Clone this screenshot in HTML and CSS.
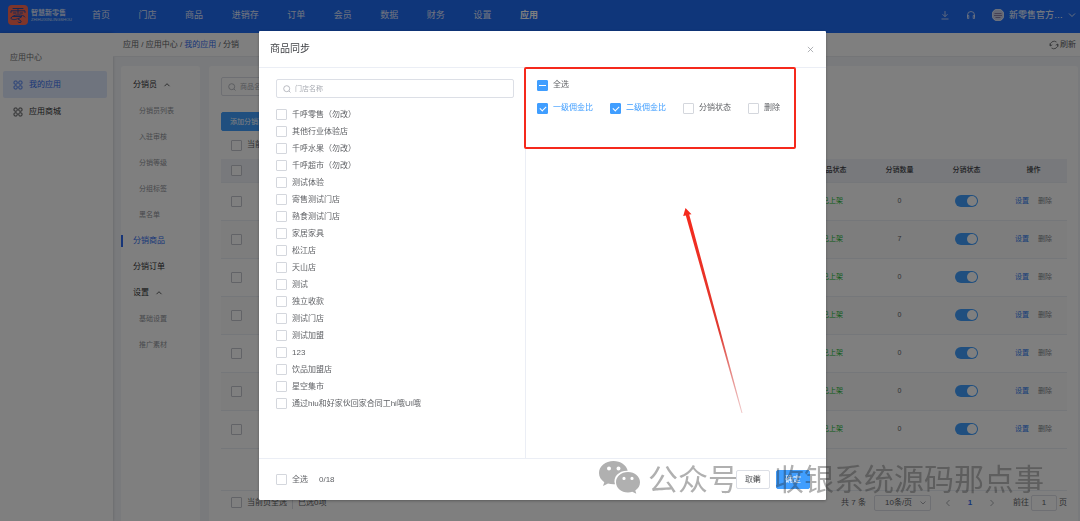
FILE: index.html
```html
<!DOCTYPE html>
<html lang="zh-CN">
<head>
<meta charset="utf-8">
<title>分销商品</title>
<link rel="stylesheet" href="styles.css">
</head>
<body>
<div class="app">
  <header class="topbar">
    <svg class="logo" viewBox="0 0 20 20"><rect width="20" height="20" rx="4" fill="#ff6a55"/><path d="M5 3.500h10M3 7.500V5.800h14v1.700M10 3.500v5M5.500 8h2.500M12 8h2.500M3 13c1-4 13-4 14-1M5 11.500h9l-4 2.500 3 2c1 2-2 2-3 1M3 13.500c2 2 5 1 7 0" fill="none" stroke="#2b4fa8" stroke-width="1" stroke-linecap="round"/></svg>
    <div class="brand"><span class="brand-name">智慧新零售</span><span class="brand-sub">ZHIHUIXINLINGSHOU</span></div>
    <nav class="topnav">
      <a href="#">首页</a><a href="#">门店</a><a href="#">商品</a><a href="#">进销存</a><a href="#">订单</a><a href="#">会员</a><a href="#">数据</a><a href="#">财务</a><a href="#">设置</a><a href="#" class="current">应用</a>
    </nav>
    <div class="tools">
      <svg class="tool" viewBox="0 0 10 10"><path d="M5 1v5.500M2.500 4.200 5 6.700l2.500-2.500M1.500 9h7"/></svg>
      <svg class="tool" viewBox="0 0 10 10"><path d="M1.500 7V5a3.500 3.500 0 0 1 7 0v2M1.500 5.500h1.300v3H1.500zM7.200 5.500h1.300v3H7.200z"/></svg>
      <div class="account">
        <svg class="avatar" viewBox="0 0 12 12"><circle cx="6" cy="6" r="6" fill="#c9d0ea"/><path d="M2.500 4.500h7M2 6.500h8M3.500 8.500h5" stroke="#8b80a8" stroke-width="1"/></svg>
        <span>新零售官方…</span>
        <svg class="caret" viewBox="0 0 8 8"><path d="M1 2.500 4 5.500l3-3"/></svg>
      </div>
    </div>
  </header>

  <div class="body">
    <aside class="sidebar">
      <p class="side-title">应用中心</p>
      <a href="#" class="side-item active"><svg class="grid-icon" viewBox="0 0 10 10"><rect x="1" y="1" width="3.200" height="3.200" rx="1"/><rect x="5.800" y="1" width="3.200" height="3.200" rx="1"/><rect x="1" y="5.800" width="3.200" height="3.200" rx="1"/><rect x="5.800" y="5.800" width="3.200" height="3.200" rx="1"/></svg>我的应用</a>
      <a href="#" class="side-item"><svg class="grid-icon" viewBox="0 0 10 10"><rect x="1" y="1" width="3.200" height="3.200" rx="1"/><rect x="5.800" y="1" width="3.200" height="3.200" rx="1"/><rect x="1" y="5.800" width="3.200" height="3.200" rx="1"/><rect x="5.800" y="5.800" width="3.200" height="3.200" rx="1"/></svg>应用商城</a>
    </aside>

    <main class="main">
      <div class="crumbs">
        <div>应用 / 应用中心 / <a href="#">我的应用</a> / 分销</div>
        <button class="refresh" type="button"><svg viewBox="0 0 10 10"><path d="M1.200 6A4 4 0 0 1 7.500 2M8.800 4A4 4 0 0 1 2.500 8M1 3.500 1.300 6l2-1.200M9 6.500 8.700 4l-2 1.200"/></svg>刷新</button>
      </div>
      <div class="cards">
        <nav class="card subnav">
          <a href="#" class="group">分销员<svg class="caret" viewBox="0 0 8 8"><path d="M1.500 5.200 4 2.700l2.500 2.500"/></svg></a>
          <a href="#" class="leaf">分销员列表</a>
          <a href="#" class="leaf">入驻审核</a>
          <a href="#" class="leaf">分销等级</a>
          <a href="#" class="leaf">分组标签</a>
          <a href="#" class="leaf">黑名单</a>
          <a href="#" class="group selected">分销商品</a>
          <a href="#" class="group">分销订单</a>
          <a href="#" class="group">设置<svg class="caret" viewBox="0 0 8 8"><path d="M1.500 5.200 4 2.700l2.500 2.500"/></svg></a>
          <a href="#" class="leaf">基础设置</a>
          <a href="#" class="leaf">推广素材</a>
        </nav>

        <section class="card content">
          <label class="search goods-search"><svg viewBox="0 0 8 8"><circle cx="3.700" cy="3.700" r="3"/><path d="m6 6 1.500 1.500"/></svg><input type="text" placeholder="商品名称"></label>
          <button class="btn primary add" type="button">添加分销商品</button>
          <label class="check page-check"><input type="checkbox">当前页全选</label>
          <table class="goods">
            <colgroup><col class="c-check"><col><col class="c-data"><col class="c-data"><col class="c-data"><col class="c-data"></colgroup>
            <thead><tr><th><input type="checkbox" aria-label="全选"></th><th></th><th>商品状态</th><th>分销数量</th><th>分销状态</th><th>操作</th></tr></thead>
            <tbody>
              <tr><td><input type="checkbox" aria-label="选择"></td><td></td><td class="on">已上架</td><td>0</td><td><input class="switch" type="checkbox" checked aria-label="分销状态"></td><td class="ops"><a href="#">设置</a><a href="#" class="del">删除</a></td></tr>
              <tr><td><input type="checkbox" aria-label="选择"></td><td></td><td class="on">已上架</td><td>7</td><td><input class="switch" type="checkbox" checked aria-label="分销状态"></td><td class="ops"><a href="#">设置</a><a href="#" class="del">删除</a></td></tr>
              <tr><td><input type="checkbox" aria-label="选择"></td><td></td><td class="on">已上架</td><td>0</td><td><input class="switch" type="checkbox" checked aria-label="分销状态"></td><td class="ops"><a href="#">设置</a><a href="#" class="del">删除</a></td></tr>
              <tr><td><input type="checkbox" aria-label="选择"></td><td></td><td class="on">已上架</td><td>0</td><td><input class="switch" type="checkbox" checked aria-label="分销状态"></td><td class="ops"><a href="#">设置</a><a href="#" class="del">删除</a></td></tr>
              <tr><td><input type="checkbox" aria-label="选择"></td><td></td><td class="on">已上架</td><td>0</td><td><input class="switch" type="checkbox" checked aria-label="分销状态"></td><td class="ops"><a href="#">设置</a><a href="#" class="del">删除</a></td></tr>
              <tr><td><input type="checkbox" aria-label="选择"></td><td></td><td class="on">已上架</td><td>0</td><td><input class="switch" type="checkbox" checked aria-label="分销状态"></td><td class="ops"><a href="#">设置</a><a href="#" class="del">删除</a></td></tr>
              <tr><td><input type="checkbox" aria-label="选择"></td><td></td><td class="on">已上架</td><td>0</td><td><input class="switch" type="checkbox" checked aria-label="分销状态"></td><td class="ops"><a href="#">设置</a><a href="#" class="del">删除</a></td></tr>
            </tbody>
          </table>
          <footer class="pager">
            <label class="check"><input type="checkbox">当前页全选</label>
            <span class="picked">已选0项</span>
            <span class="total">共 7 条</span>
            <span class="size"><select aria-label="每页条数"><option>10条/页</option></select><svg class="caret" viewBox="0 0 8 8"><path d="M1.500 2.500 4 5l2.500-2.500"/></svg></span>
            <button type="button" aria-label="上一页"><svg class="caret" viewBox="0 0 8 8"><path d="M5.500 1 2.500 4l3 3"/></svg></button>
            <button type="button" class="num">1</button>
            <button type="button" aria-label="下一页"><svg class="caret" viewBox="0 0 8 8"><path d="m2.500 1 3 3-3 3"/></svg></button>
            <label class="jump">前往<input type="text" value="1">页</label>
          </footer>
        </section>
      </div>
    </main>
  </div>
</div>

<div class="overlay">
  <div class="dialog" role="dialog" aria-labelledby="dlg-title">
    <header class="dlg-head">
      <h2 id="dlg-title">商品同步</h2>
      <button type="button" class="close" aria-label="关闭"><svg viewBox="0 0 8 8"><path d="m1 1 6 6M7 1 1 7"/></svg></button>
    </header>
    <div class="dlg-body">
      <div class="stores">
        <label class="search"><svg viewBox="0 0 8 8"><circle cx="3.700" cy="3.700" r="3"/><path d="m6 6 1.500 1.500"/></svg><input type="text" placeholder="门店名称"></label>
        <div class="store-list">
          <label class="check"><input type="checkbox">千呼零售（勿改）</label>
          <label class="check"><input type="checkbox">其他行业体验店</label>
          <label class="check"><input type="checkbox">千呼水果（勿改）</label>
          <label class="check"><input type="checkbox">千呼超市（勿改）</label>
          <label class="check"><input type="checkbox">测试体验</label>
          <label class="check"><input type="checkbox">寄售测试门店</label>
          <label class="check"><input type="checkbox">熟食测试门店</label>
          <label class="check"><input type="checkbox">家居家具</label>
          <label class="check"><input type="checkbox">松江店</label>
          <label class="check"><input type="checkbox">天山店</label>
          <label class="check"><input type="checkbox">测试</label>
          <label class="check"><input type="checkbox">独立收款</label>
          <label class="check"><input type="checkbox">测试门店</label>
          <label class="check"><input type="checkbox">测试加盟</label>
          <label class="check"><input type="checkbox">123</label>
          <label class="check"><input type="checkbox">饮品加盟店</label>
          <label class="check"><input type="checkbox">星空集市</label>
          <label class="check"><input type="checkbox">通过hiu和好家伙回家合同工hi哦UI哦</label>
        </div>
      </div>
      <div class="fields">
        <label class="check"><input type="checkbox" class="partial">全选</label>
        <div class="field-row">
          <label class="check checked"><input type="checkbox" checked>一级佣金比</label>
          <label class="check checked"><input type="checkbox" checked>二级佣金比</label>
          <label class="check"><input type="checkbox">分销状态</label>
          <label class="check"><input type="checkbox">删除</label>
        </div>
      </div>
    </div>
    <footer class="dlg-foot">
      <label class="check"><input type="checkbox">全选</label>
      <span class="count">0/18</span>
      <button type="button" class="btn">取消</button>
      <button type="button" class="btn primary">确定</button>
    </footer>
    <div class="mark-box"></div>
    <svg class="mark-arrow" viewBox="0 0 62 208"><defs><linearGradient id="fade" x1="0" y1="0" x2="0" y2="1"><stop offset="0" stop-color="#f5291c"/><stop offset=".6" stop-color="#e03a30"/><stop offset="1" stop-color="#d05050" stop-opacity=".3"/></linearGradient></defs><path d="M3.500 0 9.500 6.200 7.200 6.600 60.500 205 59.500 205 3.800 7.600 1.200 8z" fill="url(#fade)"/></svg>
  </div>
</div>

<div class="watermark">
  <svg viewBox="0 0 42 34"><path fill-rule="evenodd" d="M14.500 1C6.500 1 0 6.300 0 13c0 3.800 2 7 5.300 9.200L4 26l5-2.400c2 .6 4.500.9 7 .7C13.500 17 20 10.500 28.700 10.800 27.500 5 21.500 1 14.500 1zM10 6.500a2 2 0 1 1 0 4 2 2 0 0 1 0-4zm9.500 0a2 2 0 1 1 0 4 2 2 0 0 1 0-4z"/><path fill-rule="evenodd" d="M29 12c-6.800 0-12 4.500-12 10.200S22.200 32.500 29 32.500c1.600 0 3-.3 4.300-.7l4 2-1-3.400c2.900-1.900 4.700-4.900 4.700-8.200C41 16.500 35.800 12 29 12zm-4 4.800a1.600 1.600 0 1 1 0 3.200 1.600 1.600 0 0 1 0-3.200zm8 0a1.600 1.600 0 1 1 0 3.200 1.600 1.600 0 0 1 0-3.200z"/></svg>
  <span>公众号</span><span class="dot">·</span><span>收银系统源码那点事</span>
</div>
</body>
</html>
```
FILE: styles.css
```css
* { box-sizing: border-box; }
html, body { height: 100%; margin: 0; }
body {
  overflow: hidden;
  font: 8px/12px "Liberation Sans", "Noto Sans CJK SC", sans-serif;
  color: #606266;
  background: #f3f5f9;
}
a { color: inherit; text-decoration: none; }
button, input, select { font: inherit; color: inherit; margin: 0; padding: 0; }
button { border: 0; background: none; cursor: pointer; }
svg { flex: none; fill: none; stroke: currentColor; stroke-width: .8; }
.caret { width: 8px; height: 8px; }

.app { display: flex; flex-direction: column; height: 100vh; }

.topbar {
  display: flex;
  align-items: center;
  flex: none;
  height: 33px;
  padding: 0 4px 3px 8px;
  background: #1e6cf5;
  color: #e0e8ff;
  font-size: 9px;
}
.logo { width: 20px; height: 20px; stroke: none; }
.brand { display: flex; flex-direction: column; width: 61px; margin-left: 3px; color: #d5e0fa; }
.brand-name { font-size: 7px; line-height: 9px; font-weight: 700; }
.brand-sub { font-size: 4px; line-height: 5px; }
.topnav { display: flex; justify-content: space-between; width: 446px; }
.topnav .current { color: #fff; font-weight: 700; }
.tools { display: flex; align-items: center; gap: 16px; margin-left: auto; }
.tool { width: 10px; height: 10px; }
.account { display: flex; align-items: center; gap: 5px; color: #fff; }
.avatar { width: 12px; height: 12px; }

.body { display: flex; flex: 1; min-height: 0; }
.sidebar {
  flex: none;
  width: 113px;
  padding: 19px 6px 0 3px;
  background: #fff;
  box-shadow: 0 0 3px rgba(0, 0, 0, .2);
}
.side-title { margin: 0 0 7px 7px; color: #707276; }
.side-item {
  display: flex;
  align-items: center;
  gap: 6px;
  height: 27px;
  padding-left: 10px;
  border-radius: 2px;
  color: #303133;
}
.side-item.active { background: #dfe8fc; color: #2f6bf0; }
.grid-icon { width: 10px; height: 10px; }

.main { display: flex; flex-direction: column; flex: 1; min-width: 0; }
.crumbs {
  display: flex;
  align-items: center;
  justify-content: space-between;
  flex: none;
  height: 24px;
  padding: 0 4px 0 10px;
  border-bottom: 1px solid #e8eaee;
  background: #fff;
}
.crumbs a { color: #2f6bf0; }
.refresh { display: flex; align-items: center; gap: 1px; }
.refresh svg { width: 10px; height: 10px; }

.cards { display: flex; flex: 1; gap: 9px; min-height: 0; padding: 9px 2px 0 8px; }
.card { background: #fff; border-radius: 3px 3px 0 0; }
.subnav { flex: none; width: 79px; padding-top: 6px; }
.subnav a { display: flex; align-items: center; gap: 6px; height: 26px; }
.group { padding-left: 12px; color: #303133; }
.leaf { padding-left: 18px; color: #909399; font-size: 7px; }
.subnav .selected { color: #2f6bf0; }
.selected::before { content: ""; width: 2px; height: 12px; margin-left: -12px; margin-right: 4px; background: #2f6bf0; }

.content { display: flex; flex-direction: column; align-items: flex-start; flex: 1; min-width: 0; padding: 11px 11px 0 12px; }
.search {
  display: flex;
  align-items: center;
  gap: 4px;
  height: 19px;
  padding: 0 6px;
  border: 1px solid #dcdfe6;
  border-radius: 2px;
  background: #fff;
  color: #a8abb2;
}
.search svg { width: 8px; height: 8px; }
.search input { flex: 1; min-width: 0; border: 0; outline: 0; background: none; font-size: 7px; }
.search input::placeholder { color: #a8abb2; opacity: 1; }
.goods-search { width: 120px; }
.btn {
  width: 34px;
  height: 19px;
  border: 1px solid #dcdfe6;
  border-radius: 2px;
  background: #fff;
}
.btn.primary { border-color: #409eff; background: #409eff; color: #fff; }
.btn.add { width: 60px; margin-top: 16px; font-size: 7px; }

.check { display: flex; align-items: center; gap: 5px; white-space: nowrap; }
input[type="checkbox"] {
  display: block;
  appearance: none;
  flex: none;
  width: 11px;
  height: 11px;
  border: 1px solid #d4d7dd;
  border-radius: 1px;
  background: #fff;
}
.content input[type="checkbox"]:not(.switch) { border-color: #c4c7ce; }
.check.checked { color: #409eff; }
.check input:checked, .check .partial { position: relative; border-color: #409eff; background: #409eff; }
.check input:checked::after {
  content: "";
  position: absolute;
  left: 3px;
  top: 1px;
  width: 3px;
  height: 5px;
  border: solid #fff;
  border-width: 0 1px 1px 0;
  transform: rotate(45deg);
}
.check .partial::after { content: ""; position: absolute; left: 1px; right: 1px; top: 4px; height: 1px; background: #fff; }
.page-check { height: 28px; padding-left: 10px; }

.goods { width: 100%; table-layout: fixed; border-collapse: collapse; font-size: 7px; text-align: center; }
.c-check { width: 31px; }
.c-data { width: 67px; }
.goods th, .goods td { padding: 0; border-bottom: 1px solid #ebeef5; }
.goods th { height: 23px; background: #f0f3f9; color: #404246; font-weight: 500; }
.goods td { height: 38px; }
.goods tbody tr:nth-child(even) { background: #fafafa; }
.goods input { margin: 0 auto; }
.goods .on { color: #22b830; }
.ops a { color: #2f7df0; }
.ops .del { margin-left: 9px; color: #808388; }
input[type="checkbox"].switch {
  width: 23px;
  height: 12px;
  padding: 1px;
  border: 0;
  border-radius: 6px;
  background: #409eff;
}
.switch::before { content: ""; display: block; width: 10px; height: 10px; margin-left: auto; border-radius: 50%; background: #fff; }

.pager {
  display: flex;
  align-items: center;
  width: 100%;
  height: 25px;
  margin-top: 41px;
  padding-left: 10px;
  border-top: 1px solid #ebeef5;
  white-space: nowrap;
}
.picked { margin-left: 5px; padding-left: 5px; border-left: 1px solid #dcdfe6; }
.total { margin-left: auto; margin-right: 8px; }
.size { display: flex; align-items: center; width: 57px; height: 16px; margin-right: 6px; padding-right: 3px; border: 1px solid #dcdfe6; border-radius: 2px; }
.size select { appearance: none; flex: 1; min-width: 0; padding-left: 10px; border: 0; background: none; }
.pager .caret { color: #909399; }
.pager button { display: flex; align-items: center; justify-content: center; width: 22px; height: 16px; }
.pager .num { color: #2f6bf0; font-weight: 700; }
.jump { display: flex; align-items: center; gap: 2px; margin-left: 10px; }
.jump input { width: 26px; height: 16px; border: 1px solid #dcdfe6; border-radius: 2px; background: none; text-align: center; }

.overlay {
  position: fixed;
  inset: 0;
  display: flex;
  align-items: flex-start;
  justify-content: center;
  padding: 31px 0 0 5px;
  background: rgba(0, 0, 0, .5);
}
.dialog {
  position: relative;
  display: flex;
  flex-direction: column;
  width: 567px;
  border-radius: 1px;
  background: #fff;
  box-shadow: 0 1px 3px rgba(0, 0, 0, .3);
}
.dlg-head {
  display: flex;
  align-items: center;
  justify-content: space-between;
  height: 37px;
  padding: 0 12px 0 11px;
  border-bottom: 1px solid #ebeef5;
}
.dlg-head h2 { margin: 0; font-size: 10px; font-weight: 400; color: #404246; }
.close { display: flex; color: #909399; }
.close svg { width: 7px; height: 7px; }
.dlg-body { display: grid; grid-template-columns: 267px 1fr; }
.stores { padding: 11px 11px 46px 17px; border-right: 1px solid #ebeef5; }
.store-list { display: flex; flex-direction: column; margin-top: 8px; }
.store-list .check { height: 17px; }
.fields { padding: 8px 11px; }
.fields .check { height: 18px; }
.field-row { display: flex; gap: 17px; margin-top: 5px; }
.dlg-foot { display: flex; align-items: center; height: 42px; padding: 0 16px 0 17px; border-top: 1px solid #ebeef5; }
.count { margin: 0 auto 0 11px; }
.dlg-foot .btn + .btn { margin-left: 6px; }

.mark-box {
  position: absolute;
  left: 265px;
  top: 36px;
  width: 272px;
  height: 82px;
  border: 2px solid #f5291c;
  border-radius: 2px;
}
.mark-arrow { position: absolute; left: 423px; top: 177px; width: 62px; height: 208px; stroke: none; }

.watermark {
  position: absolute;
  left: 599px;
  top: 455px;
  display: flex;
  align-items: center;
  height: 44px;
  color: #242424;
  font: 30px/44px "Noto Sans CJK SC", sans-serif;
  white-space: nowrap;
  opacity: .36;
}
.watermark svg { width: 42px; height: 34px; margin-right: 7px; fill: #242424; stroke: none; }
.watermark .dot { width: 36px; text-align: center; }
```
